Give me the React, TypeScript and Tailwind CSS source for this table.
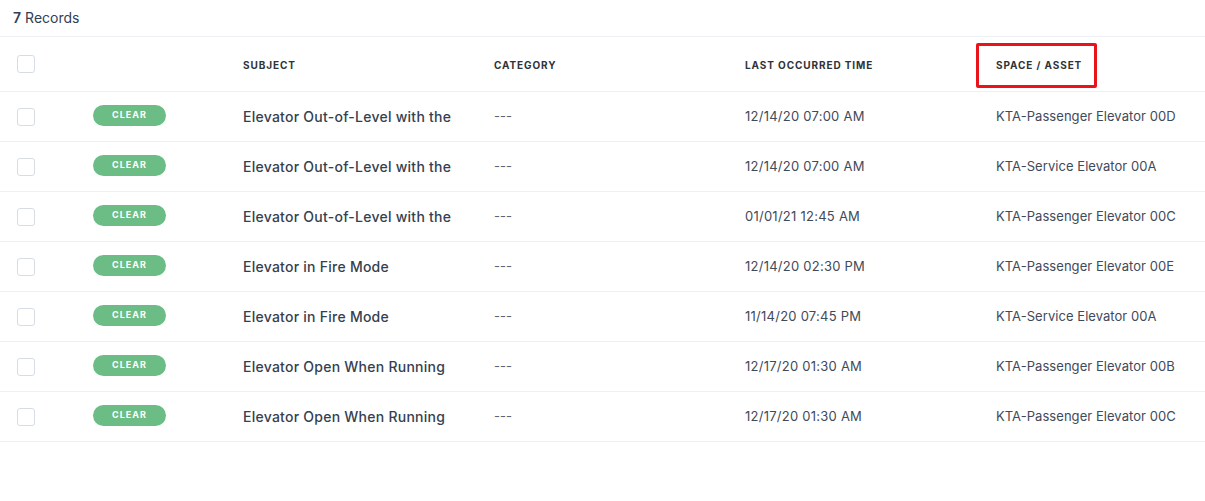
import React from 'react'

const rows = [
  { subject: 'Elevator Out-of-Level with the', time: '12/14/20 07:00 AM', space: 'KTA-Passenger Elevator 00D' },
  { subject: 'Elevator Out-of-Level with the', time: '12/14/20 07:00 AM', space: 'KTA-Service Elevator 00A' },
  { subject: 'Elevator Out-of-Level with the', time: '01/01/21 12:45 AM', space: 'KTA-Passenger Elevator 00C' },
  { subject: 'Elevator in Fire Mode', time: '12/14/20 02:30 PM', space: 'KTA-Passenger Elevator 00E' },
  { subject: 'Elevator in Fire Mode', time: '11/14/20 07:45 PM', space: 'KTA-Service Elevator 00A' },
  { subject: 'Elevator Open When Running', time: '12/17/20 01:30 AM', space: 'KTA-Passenger Elevator 00B' },
  { subject: 'Elevator Open When Running', time: '12/17/20 01:30 AM', space: 'KTA-Passenger Elevator 00C' },
]

const cols = 'grid grid-cols-[93px_150px_251px_251px_251px_1fr] items-center'
const head = 'text-[10px] font-bold tracking-[0.9px] uppercase text-[#2f3337] pt-[3px]'

function Checkbox() {
  return <span className="block w-[18px] h-[18px] rounded-[3px] border border-[#d6dde4] bg-white" />
}

export default function App() {
  return (
    <div className="w-[1205px] h-[501px] bg-white overflow-hidden font-['Inter',sans-serif] text-[#324056]">
      <div className="h-[36px] flex items-center pl-[13px] text-[14px] text-[#324056] pb-[2px]">
        <span className="font-semibold mr-[4px]">7</span>Records
      </div>

      {/* Header */}
      <div className={`${cols} h-[56px] border-t border-b border-[#eef0f3]`}>
        <div className="pl-[17px]"><Checkbox /></div>
        <div />
        <div className={head}>Subject</div>
        <div className={head}>Category</div>
        <div className={head}>Last Occurred Time</div>
        <div className="relative h-full flex items-center">
          <span className={head}>Space / Asset</span>
          <span className="absolute left-[-20px] top-[6px] w-[121px] h-[45px] border-[3px] border-[#e8131b] rounded-[2px]" />
        </div>
      </div>

      {/* Rows */}
      {rows.map((r, i) => (
        <div key={i} className={`${cols} h-[50px] border-b border-[#eef0f3]`}>
          <div className="pl-[17px]"><Checkbox /></div>
          <div className="pb-[7px]">
            <span className="inline-flex items-center justify-center w-[73px] h-[21px] rounded-full bg-[#6bbd85] text-white text-[9px] font-bold tracking-[1px]">
              CLEAR
            </span>
          </div>
          <div className="text-[14px] font-medium tracking-[0.25px] text-[#363f4f]">{r.subject}</div>
          <div className="text-[13px] text-[#5b6675]">---</div>
          <div className="text-[13px] tracking-[0.25px] text-[#3f4a5a]">{r.time}</div>
          <div className="text-[13px] tracking-[0.05px] text-[#3f4a5a] whitespace-nowrap">{r.space}</div>
        </div>
      ))}
    </div>
  )
}
